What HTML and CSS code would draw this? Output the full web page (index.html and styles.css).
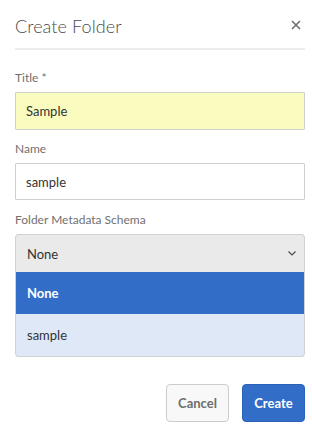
FILE: index.html
```html
<!DOCTYPE html>
<html>
<head>
<meta charset="utf-8">
<link rel="stylesheet" href="styles.css">
</head>
<body>
<div class="dialog">
  <div class="header">
    <h1 class="title">Create Folder</h1>
    <span class="close"><svg width="10" height="10" viewBox="0 0 10 10"><path d="M1 1 L9 9 M9 1 L1 9" stroke="#6e6e6e" stroke-width="1.6" fill="none"/></svg></span>
  </div>
  <div class="form">
    <label class="label first">Title *</label>
    <div class="input yellow">Sample</div>
    <label class="label second">Name</label>
    <div class="input short">sample</div>
    <label class="label third">Folder Metadata Schema</label>
    <div class="select">
      <span>None</span>
      <svg width="8" height="5" viewBox="0 0 8 5"><path d="M0.5 0.5 L4 4 L7.5 0.5" stroke="#4b4b4b" stroke-width="1.2" fill="none"/></svg>
    </div>
    <div class="listbox">
      <div class="option selected">None</div>
      <div class="option">sample</div>
    </div>
  </div>
  <div class="footer">
    <button class="btn cancel">Cancel</button>
    <button class="btn create">Create</button>
  </div>
</div>
</body>
</html>
```
FILE: styles.css
```css
* { box-sizing: border-box; }
html, body { margin: 0; padding: 0; background: #fff; }
body { font-family: Lato, "Open Sans", sans-serif; width: 312px; height: 426px; overflow: hidden; }
.dialog { padding: 0 7px 0 15px; }
.header {
  height: 50px;
  display: flex;
  align-items: center;
  justify-content: space-between;
  border-bottom: 2px solid #ececec;
  padding-top: 3px;
}
.title { margin: 0; font-size: 18px; font-weight: 300; color: #4b4b4b; letter-spacing: 0.1px; }
.close { display: flex; width: 10px; height: 10px; margin-right: 4px; margin-top: -1px; }
.form { display: flex; flex-direction: column; }
.label { font-size: 12px; line-height: 16px; color: #707070; margin-bottom: 6px; }
.label.first { margin-top: 20px; }
.label.second { margin-top: 11px; }
.label.third { margin-top: 12px; }
.input {
  height: 38px;
  border: 1px solid #cfcfcf;
  border-radius: 1px;
  padding: 0 10px;
  display: flex;
  align-items: center;
  font-size: 13px;
  color: #333;
}
.input.short { height: 37px; }
.input.yellow { background: #fafcbf; }
.select {
  height: 38px;
  background: #eaeaea;
  border: 1px solid #d2d2d2;
  border-bottom: none;
  border-radius: 4px 4px 0 0;
  padding: 0 8px 0 11px;
  display: flex;
  align-items: center;
  justify-content: space-between;
  font-size: 13px;
  color: #333;
}
.listbox {
  border: 1px solid #d2d2d2;
  border-top: none;
  border-radius: 0 0 4px 4px;
  background: #dfe8f7;
  overflow: hidden;
}
.option { height: 42px; display: flex; align-items: center; padding: 0 11px; font-size: 13px; color: #333; }
.option.selected { background: #326ec8; color: #fff; font-weight: 700; }
.footer { display: flex; justify-content: flex-end; gap: 13px; margin-top: 27px; }
.btn {
  height: 38px;
  border-radius: 4px;
  font-family: Lato, "Open Sans", sans-serif;
  font-size: 13px;
  font-weight: 700;
  padding: 0;
}
.cancel { width: 63px; background: #f8f8f8; border: 1px solid #cccccc; color: #6e6e6e; }
.create { width: 63px; background: #326ec8; border: 1px solid #2a62b8; color: #fff; }
```
